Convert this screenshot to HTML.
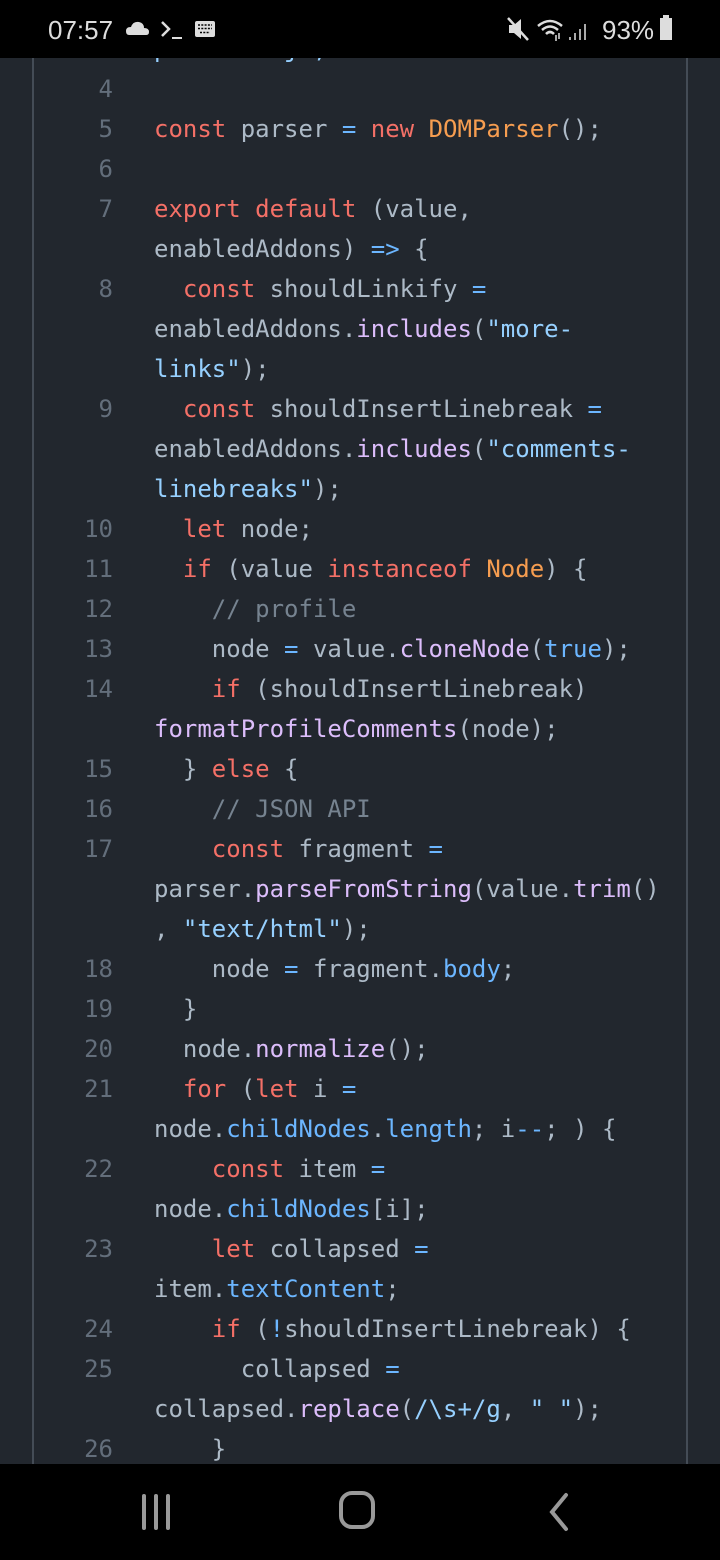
<!DOCTYPE html>
<html><head><meta charset="utf-8"><style>
html,body{margin:0;padding:0;}
body{width:720px;height:1560px;background:#22272e;position:relative;overflow:hidden;font-family:"DejaVu Sans Mono","Liberation Mono",monospace;}
.bl{position:absolute;top:0;bottom:0;width:2px;background:#444c56;}
#code{position:absolute;top:29px;left:0;width:720px;}
.r{height:40px;line-height:40px;font-size:24px;color:#adbac7;white-space:pre;position:relative;}
.n{position:absolute;left:0;width:113px;text-align:right;color:#636e7b;}
.c{position:absolute;left:154px;}
.k{color:#f47067}.o{color:#f69d50}.b{color:#6cb6ff}.p{color:#dcbdfb}.s{color:#96d0ff}.cm{color:#768390}
#sb{position:absolute;top:0;left:0;width:720px;height:58px;background:#000;color:#ddd;font-family:"Liberation Sans",sans-serif;}
#nb{position:absolute;top:1464px;left:0;width:720px;height:96px;background:#000;}
</style></head><body>
<div class="bl" style="left:32px"></div>
<div class="bl" style="left:686px"></div>
<div id="code">
<div class="r"><span class="c"><span class="s">p        j ,</span></span></div>
<div class="r"><span class="n">4</span></div>
<div class="r"><span class="n">5</span><span class="c"><span class="k">const</span> parser <span class="b">=</span> <span class="k">new</span> <span class="o">DOMParser</span>();</span></div>
<div class="r"><span class="n">6</span></div>
<div class="r"><span class="n">7</span><span class="c"><span class="k">export</span> <span class="k">default</span> (value,</span></div>
<div class="r"><span class="c">enabledAddons) <span class="b">=&gt;</span> {</span></div>
<div class="r"><span class="n">8</span><span class="c">  <span class="k">const</span> shouldLinkify <span class="b">=</span></span></div>
<div class="r"><span class="c">enabledAddons.<span class="p">includes</span>(<span class="s">"more-</span></span></div>
<div class="r"><span class="c"><span class="s">links"</span>);</span></div>
<div class="r"><span class="n">9</span><span class="c">  <span class="k">const</span> shouldInsertLinebreak <span class="b">=</span></span></div>
<div class="r"><span class="c">enabledAddons.<span class="p">includes</span>(<span class="s">"comments-</span></span></div>
<div class="r"><span class="c"><span class="s">linebreaks"</span>);</span></div>
<div class="r"><span class="n">10</span><span class="c">  <span class="k">let</span> node;</span></div>
<div class="r"><span class="n">11</span><span class="c">  <span class="k">if</span> (value <span class="k">instanceof</span> <span class="o">Node</span>) {</span></div>
<div class="r"><span class="n">12</span><span class="c">    <span class="cm">// profile</span></span></div>
<div class="r"><span class="n">13</span><span class="c">    node <span class="b">=</span> value.<span class="p">cloneNode</span>(<span class="b">true</span>);</span></div>
<div class="r"><span class="n">14</span><span class="c">    <span class="k">if</span> (shouldInsertLinebreak)</span></div>
<div class="r"><span class="c"><span class="p">formatProfileComments</span>(node);</span></div>
<div class="r"><span class="n">15</span><span class="c">  } <span class="k">else</span> {</span></div>
<div class="r"><span class="n">16</span><span class="c">    <span class="cm">// JSON API</span></span></div>
<div class="r"><span class="n">17</span><span class="c">    <span class="k">const</span> fragment <span class="b">=</span></span></div>
<div class="r"><span class="c">parser.<span class="p">parseFromString</span>(value.<span class="p">trim</span>()</span></div>
<div class="r"><span class="c">, <span class="s">"text/html"</span>);</span></div>
<div class="r"><span class="n">18</span><span class="c">    node <span class="b">=</span> fragment.<span class="b">body</span>;</span></div>
<div class="r"><span class="n">19</span><span class="c">  }</span></div>
<div class="r"><span class="n">20</span><span class="c">  node.<span class="p">normalize</span>();</span></div>
<div class="r"><span class="n">21</span><span class="c">  <span class="k">for</span> (<span class="k">let</span> i <span class="b">=</span></span></div>
<div class="r"><span class="c">node.<span class="b">childNodes</span>.<span class="b">length</span>; i<span class="b">--</span>; ) {</span></div>
<div class="r"><span class="n">22</span><span class="c">    <span class="k">const</span> item <span class="b">=</span></span></div>
<div class="r"><span class="c">node.<span class="b">childNodes</span>[i];</span></div>
<div class="r"><span class="n">23</span><span class="c">    <span class="k">let</span> collapsed <span class="b">=</span></span></div>
<div class="r"><span class="c">item.<span class="b">textContent</span>;</span></div>
<div class="r"><span class="n">24</span><span class="c">    <span class="k">if</span> (<span class="b">!</span>shouldInsertLinebreak) {</span></div>
<div class="r"><span class="n">25</span><span class="c">      collapsed <span class="b">=</span></span></div>
<div class="r"><span class="c">collapsed.<span class="p">replace</span>(<span class="s">/\s+/g</span>, <span class="s">" "</span>);</span></div>
<div class="r"><span class="n">26</span><span class="c">    }</span></div>
</div>
<div id="sb">
<span style="position:absolute;left:48px;top:15px;font-size:26px;">07:57</span>
<svg style="position:absolute;left:126px;top:20px" width="24" height="16"><path d="M3 15 Q0 15 0 11 Q0 7 5 7 Q7 1 13 2 Q18 3 18 8 Q23 8 23 12 Q23 15 20 15Z" fill="#ddd"/></svg>
<svg style="position:absolute;left:160px;top:20px" width="26" height="22"><path d="M2 2 L9 9 L2 16" stroke="#ddd" stroke-width="2.5" fill="none"/><path d="M12 18 H22" stroke="#ddd" stroke-width="2"/></svg>
<svg style="position:absolute;left:195px;top:21px" width="20" height="16"><rect x="0" y="0" width="20" height="16" rx="2" fill="#ddd"/><path d="M3 4h14M3 7.5h14M5 11.5h10" stroke="#000" stroke-width="1.6" stroke-dasharray="2 1.3"/></svg>
<svg style="position:absolute;left:506px;top:16px" width="24" height="26"><path d="M3 9h5l7-6v20l-7-6H3z" fill="#ddd"/><path d="M2 2L22 24" stroke="#ddd" stroke-width="2.5"/></svg>
<svg style="position:absolute;left:536px;top:18px" width="30" height="24"><path d="M2 8 Q14 -2 26 8" stroke="#ddd" stroke-width="2.5" fill="none"/><path d="M6 12 Q14 5 22 12" stroke="#ddd" stroke-width="2.5" fill="none"/><path d="M10 16 Q14 12 18 16" stroke="#ddd" stroke-width="2.5" fill="none"/><path d="M20 17v6M23 15v6" stroke="#ddd" stroke-width="1.5"/></svg>
<svg style="position:absolute;left:568px;top:18px" width="22" height="24"><path d="M2 22v-3M7 22v-7M12 22v-11M17 22v-16" stroke="#aaa" stroke-width="2"/></svg>
<span style="position:absolute;left:602px;top:15px;font-size:26px;">93%</span>
<div style="position:absolute;left:660px;top:18px;width:12px;height:22px;background:#ddd;"></div>
<div style="position:absolute;left:663px;top:15px;width:6px;height:4px;background:#ddd;"></div>
</div>
<div id="nb">
<svg style="position:absolute;left:138px;top:30px" width="40" height="40"><path d="M6 2v32M18 2v32M30 2v32" stroke="#999" stroke-width="4" stroke-linecap="round"/></svg>
<svg style="position:absolute;left:336px;top:26px" width="44" height="44"><rect x="5" y="3" width="32" height="34" rx="11" stroke="#999" stroke-width="4" fill="none"/></svg>
<svg style="position:absolute;left:544px;top:28px" width="30" height="40"><path d="M22 3L8 20L22 37" stroke="#999" stroke-width="4" fill="none" stroke-linecap="round"/></svg>
</div>
</body></html>
